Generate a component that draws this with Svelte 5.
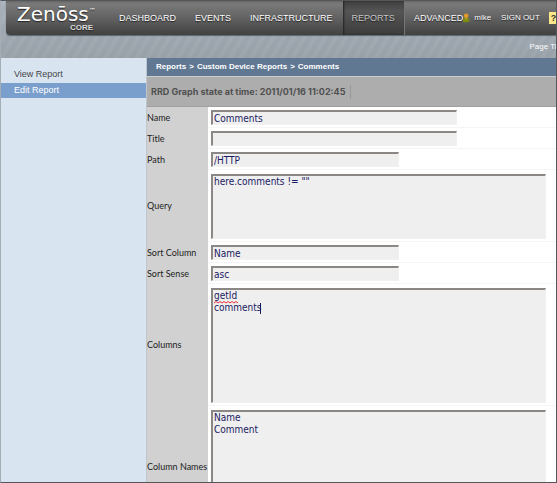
<script>
  const nav = ['Dashboard', 'Events', 'Infrastructure', 'Reports', 'Advanced'];
  const active = 'Reports';
  const crumbs = ['Reports', 'Custom Device Reports', 'Comments'];

  let fields = $state([
    { id: 'name', label: 'Name', value: 'Comments', size: 'medium' },
    { id: 'title', label: 'Title', value: '', size: 'medium' },
    { id: 'path', label: 'Path', value: '/HTTP', size: 'short' },
    { id: 'query', label: 'Query', value: 'here.comments != ""', area: 'small' },
    { id: 'sort-column', label: 'Sort Column', value: 'Name', size: 'short' },
    { id: 'sort-sense', label: 'Sort Sense', value: 'asc', size: 'short' },
    { id: 'columns', label: 'Columns', value: 'getId\ncomments', area: 'large', editing: true },
    { id: 'column-names', label: 'Column Names', value: 'Name\nComment', area: 'large' }
  ]);
</script>

<div class="page">
  <header>
    <div class="topbar">
      <a class="logo" href="#home">
        <span class="brand">Zenōss<sup>™</sup></span>
        <span class="edition">CORE</span>
      </a>
      <nav>
        {#each nav as item}
          <a href="#{item}" class:active={item === active}>{item.toUpperCase()}</a>
        {/each}
      </nav>
      <div class="user">
        <svg width="8" height="10" viewBox="0 0 8 10" aria-hidden="true">
          <path d="M1 9V6.6Q1.2 4.5 4 4.5T7.4 6.6V8.4Q4 9.8 1 9Z" fill="#7d8a13" />
          <circle cx="4.2" cy="2.8" r="2.3" fill="#e29a2c" />
          <path d="M2.5 5.2 4.2 7 5.8 5.2Z" fill="#b4a72a" />
        </svg>
        <a href="#mike">mike</a>
      </div>
      <a class="signout" href="#signout">SIGN OUT</a>
      <a class="help" href="#help">?</a>
    </div>
    <div class="subbar"><a href="#tips">Page Tips</a></div>
  </header>

  <div class="body">
    <aside>
      <a href="#view">View Report</a>
      <a href="#edit" class="selected">Edit Report</a>
    </aside>
    <main>
      <div class="crumbs">
        {#each crumbs as crumb, i}
          {#if i}<span>&gt;</span>{/if}<a href="#{crumb}">{crumb}</a>
        {/each}
      </div>
      <div class="state"><h1>RRD Graph state at time: 2011/01/16 11:02:45</h1></div>
      <form>
        {#each fields as field}
          <div class="row">
            <label for={field.id}>{field.label}</label>
            <div class="cell" class:tall={field.area}>
              {#if field.area}
                <textarea id={field.id} class={field.area} bind:value={field.value} spellcheck="false"></textarea>
                {#if field.editing}
                  <svg class="squiggle" width="24" height="3" viewBox="0 0 24 3" aria-hidden="true">
                    <path d="M0 2 2 .5 4 2 6 .5 8 2 10 .5 12 2 14 .5 16 2 18 .5 20 2 22 .5 24 2" fill="none" stroke="#e8303c" />
                  </svg>
                  <i class="caret"></i>
                {/if}
              {:else}
                <input id={field.id} class={field.size} type="text" bind:value={field.value} />
              {/if}
            </div>
          </div>
        {/each}
      </form>
    </main>
  </div>
</div>

<style>
  .page {
    box-sizing: border-box;
    height: 100vh;
    overflow: hidden;
    display: flex;
    flex-direction: column;
    border: 1px solid #55565a;
    border-left-color: #a5adb5;
    font: 9px/12px "Liberation Sans", Arial, sans-serif;
    background: #fff;
  }
  a { color: inherit; text-decoration: none; }

  header {
    flex: none;
    overflow: hidden;
    color: #fff;
    background:
      repeating-linear-gradient(120deg, #ffffff0d 0 4px, #0000 4px 9px),
      linear-gradient(#a9b2bb, #9da6af 60%, #98a0a8);
  }
  .topbar {
    display: flex;
    align-items: center;
    height: 34px;
    margin-left: 5px;
    border-bottom-left-radius: 4px;
    background: linear-gradient(#666 0, #7a7a7a 8%, #626262 50%, #414141 100%);
    box-shadow: 0 1px 1px #5f666d;
    text-shadow: 0 1px 1px #222;
    white-space: nowrap;
  }
  .logo {
    flex: none;
    width: 104px;
    box-sizing: border-box;
    padding-left: 11px;
    display: flex;
    flex-direction: column;
  }
  .brand { font: 20px/20px "DejaVu Sans", sans-serif; }
  .brand sup { font-size: 7px; line-height: 7px; vertical-align: 8px; }
  .edition { font-weight: bold; font-size: 8px; line-height: 8px; padding-left: 53px; color: #ddd; }
  nav { display: flex; align-self: stretch; gap: 1px; }
  nav a { display: flex; align-items: center; padding: 0 9px; }
  nav a.active {
    color: #c6c6c6;
    background: linear-gradient(#3f3f3f, #555 30%, #3c3c3c);
    box-shadow: inset 1px 0 2px #222, 1px 0 #777;
  }
  nav a:last-child { padding-right: 0; }
  .user { display: flex; align-items: center; gap: 4px; font-size: 8px; }
  .user svg { flex: none; margin-left: -1px; }
  .signout { margin-left: 10px; font-size: 8px; }
  .help {
    flex: none;
    width: 12px;
    margin-left: 9px;
    padding-left: 2px;
    color: #333;
    background: #fbe88a;
    font-weight: bold;
    text-shadow: none;
  }
  .subbar { display: flex; justify-content: flex-end; height: 23px; align-items: center; white-space: nowrap; }
  .subbar a { margin-right: -9px; font-size: 8px; }

  .body { flex: 1; min-height: 0; display: flex; }
  aside {
    flex: none;
    width: 145px;
    padding-top: 8px;
    background: #d9e4f1;
    border-right: 1px solid #c0c6cc;
    color: #444;
  }
  aside a { display: block; padding: 2px 13px 3px; line-height: 12px; }
  aside .selected { color: #fff; background: #7a9fcd; padding: 1px 13px 2px; }

  main { flex: 1; min-width: 0; }
  .crumbs {
    padding: 3px 9px;
    color: #fff;
    background: #617893;
    font-weight: bold;
    font-size: 8px;
    display: flex;
    gap: 3px;
  }
  .state {
    display: flex;
    height: 29px;
    align-items: center;
    padding-left: 4px;
    background: #adadad;
    border-top: 1px solid #c9ced4;
    border-bottom: 1px solid #a0a0a0;
  }
  h1 {
    margin: 0;
    padding-right: 5px;
    font-family: Inter, "Liberation Sans", sans-serif;
    font-size: 9px;
    line-height: 14px;
    color: #505050;
    border-right: 1px solid #999;
  }

  .row { display: flex; }
  label {
    flex: none;
    width: 61px;
    display: flex;
    align-items: center;
    box-sizing: border-box;
    background: #d1d1d1;
    color: #222;
    font-family: Lato, "Liberation Sans", sans-serif;
    white-space: nowrap;
  }
  .cell {
    position: relative;
    flex: 1;
    min-width: 0;
    padding: 3px 10px 2px 3px;
    border-bottom: 1px solid #f5f5f5;
    display: flex;
  }
  .tall { padding-top: 4px; }
  input, textarea {
    display: block;
    box-sizing: border-box;
    margin: 0;
    border: 1px solid #f3f1ee;
    border-top: 2px solid #8b8785;
    border-left: 2px solid #8b8785;
    border-radius: 0;
    background: #efefef;
    color: #1a1a62;
    font: 10px/12px "DejaVu Sans Condensed", "DejaVu Sans", sans-serif;
    padding: 0 1px;
    outline: none;
    resize: none;
    overflow: hidden;
  }
  input { height: 15px; }
  .medium { width: 74%; max-width: 246px; }
  .short { width: 57%; max-width: 188px; }
  textarea { width: 100%; }
  .small { height: 65px; }
  .large { height: 115px; }
  .squiggle { position: absolute; left: 6px; top: 17px; }
  .caret { position: absolute; left: 52px; top: 19px; width: 1px; height: 11px; background: #1a1a62; }
</style>
